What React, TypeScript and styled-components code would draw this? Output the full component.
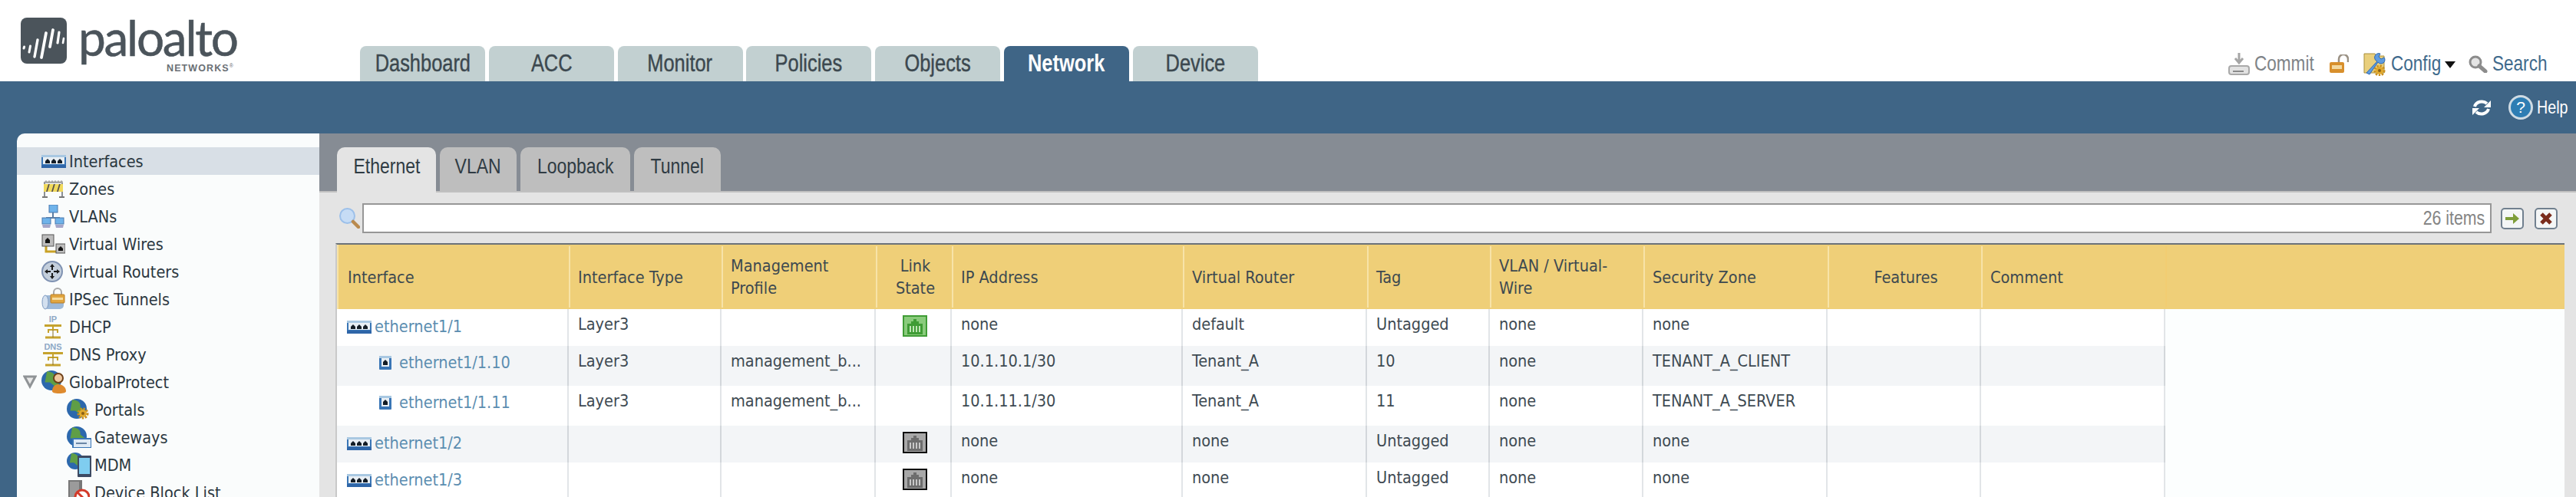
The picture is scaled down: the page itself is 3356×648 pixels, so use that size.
import React from "react"
import styled, { createGlobalStyle } from "styled-components"

const GlobalStyle = createGlobalStyle`
  html, body {
    margin: 0;
    padding: 0;
    background: #fff;
  }
`

const UI_FONT = `"DejaVu Sans Condensed", "DejaVu Sans", sans-serif`
const NARROW_FONT = `"Liberation Sans", sans-serif`

// the product's tall, tight label face: no narrow family is installed, so squeeze Arial metrics
const Squeezed = styled.span<{ $origin?: string }>`
  display: inline-block;
  white-space: nowrap;
  transform: scaleX(0.82);
  transform-origin: ${p => p.$origin ?? "center"};
`

const Page = styled.div`
  width: 3356px;
  height: 648px;
  overflow: hidden;
  display: flex;
  flex-direction: column;
  font-family: ${UI_FONT};
`

const Header = styled.header`
  height: 106px;
  flex: none;
  display: flex;
  align-items: flex-end;
`

const LogoBlock = styled.div`
  width: 469px;
  height: 106px;
  flex: none;
  padding: 23px 0 0 27px;
  box-sizing: border-box;
  display: flex;
  gap: 15px;
`

const LogoWords = styled.div`
  display: flex;
  flex-direction: column;
  width: 203px;
`

const LogoName = styled.div`
  font-family: Lato, sans-serif;
  font-size: 64px;
  line-height: 52px;
  letter-spacing: -2.3px;
  color: #4b545b;
  white-space: nowrap;
  -webkit-text-stroke: 0.5px currentColor;
`

const LogoSub = styled.div`
  font-family: "Liberation Sans", sans-serif;
  font-weight: bold;
  font-size: 12.5px;
  line-height: 12px;
  letter-spacing: 1.1px;
  color: #6a7075;
  margin-top: 8px;
  text-align: right;
  white-space: nowrap;

  sup {
    font-size: 7px;
    font-weight: normal;
    line-height: 0;
  }
`

const MainTabs = styled.nav`
  display: flex;
  gap: 4.8px;
`

const MainTab = styled.div<{ $active?: boolean }>`
  width: 163px;
  height: 46px;
  box-sizing: border-box;
  border-radius: 8px 8px 0 0;
  background: ${p => (p.$active ? "#3f6586" : "#c2d0d1")};
  color: ${p => (p.$active ? "#ffffff" : "#3c484f")};
  font-family: ${NARROW_FONT};
  font-size: 31px;
  font-weight: ${p => (p.$active ? 700 : 400)};
  line-height: 46px;
  text-align: center;
  -webkit-text-stroke: ${p => (p.$active ? 0 : 0.4)}px currentColor;
`

const Tools = styled.div`
  margin-left: auto;
  height: 46px;
  padding-right: 39px;
  display: flex;
  align-items: center;
`

const ToolText = styled.span<{ $muted?: boolean; $width: number }>`
  width: ${p => p.$width}px;
  font-family: ${NARROW_FONT};
  font-size: 27.5px;
  line-height: 32px;
  color: ${p => (p.$muted ? "#7f8488" : "#3f6a8c")};
  margin-left: 6px;
`

const ToolIcon = styled.span<{ $gap?: number }>`
  display: flex;
  margin-left: ${p => p.$gap ?? 0}px;
`

const Caret = styled.span`
  width: 0;
  height: 0;
  margin: 2px 0 0 6px;
  border-left: 7.5px solid transparent;
  border-right: 7.5px solid transparent;
  border-top: 9px solid #111;
`

const BlueBar = styled.div`
  height: 68px;
  flex: none;
  background: #3f6586;
  display: flex;
  align-items: center;
  justify-content: flex-end;
  padding-right: 12px;
  gap: 22px;
`

const HelpGroup = styled.div`
  display: flex;
  align-items: center;
  gap: 5px;
`

const HelpText = styled.span`
  width: 39px;
  font-family: ${NARROW_FONT};
  font-size: 24px;
  color: #fff;
`

const Main = styled.div`
  flex: 1;
  min-height: 0;
  background: #3f6586;
  display: flex;
`

const Sidebar = styled.aside`
  width: 394px;
  flex: none;
  margin-left: 22px;
  padding-top: 18px;
  box-sizing: border-box;
  background: #fafcfc;
  border-radius: 10px 0 0 0;
`

const TreeRow = styled.div<{ $selected?: boolean; $child?: boolean }>`
  height: 36px;
  display: flex;
  align-items: center;
  padding-left: ${p => (p.$child ? 65 : 32)}px;
  background: ${p => (p.$selected ? "#d8dfe6" : "transparent")};
  color: #2b3740;
  font-size: 21.5px;
  white-space: nowrap;
  position: relative;
`

const TreeIcon = styled.span`
  width: 32px;
  height: 32px;
  flex: none;
  margin-right: 4px;
  display: flex;
  align-items: center;
`

const Twisty = styled.span`
  position: absolute;
  left: 8px;
  top: 9px;
  display: flex;
`

const Content = styled.section`
  flex: 1;
  min-width: 0;
  background: #868c94;
  display: flex;
  flex-direction: column;
`

const SubTabs = styled.div`
  height: 75px;
  flex: none;
  box-sizing: border-box;
  padding: 18px 0 0 23px;
  display: flex;
  gap: 5px;
`

const SubTab = styled.div<{ $active?: boolean; $width: number }>`
  width: ${p => p.$width}px;
  height: ${p => (p.$active ? 59 : 57)}px;
  position: relative;
  border-radius: 10px 10px 0 0;
  background: ${p => (p.$active ? "#e4e4e4" : "#bebebe")};
  color: #2f3b43;
  font-family: ${NARROW_FONT};
  font-size: 28px;
  line-height: 50px;
  text-align: center;
`

const Panel = styled.div`
  flex: 1;
  min-height: 0;
  background: #e4e4e4;
  border-top: 2px solid #c0c0c0;
  padding: 14px 15px 0 21px;
`

const FilterRow = styled.div`
  display: flex;
  align-items: center;
  height: 39px;
  margin-bottom: 13px;
  padding-left: 5px;
  padding-right: 9px;
`

const FilterInput = styled.div`
  flex: 1;
  height: 39px;
  margin-left: 3px;
  box-sizing: border-box;
  background: #fff;
  border: 2px solid #979797;
  padding-right: 7px;
  text-align: right;
  font-family: ${NARROW_FONT};
  font-size: 26px;
  line-height: 35px;
  color: #858585;
`

const FilterButton = styled.span<{ $gap: number }>`
  display: flex;
  margin-left: ${p => p.$gap}px;
`

const Table = styled.div`
  background: #fcfefe;
  border-top: 2px solid #6b7278;
  border-left: 2px solid #c9c9c9;
`

const COLUMNS = "302px 199px 201px 99px 301px 240px 160px 200px 240px 200px 240px"

const HeadRow = styled.div`
  display: grid;
  grid-template-columns: ${COLUMNS} 1fr;
  height: 84px;
  box-sizing: border-box;
  background: #efcf78;
  padding: 2px 0 2px 2px;
  box-shadow: inset 2px 0 0 #f7e3a8;
`

const HeadCell = styled.div<{ $center?: boolean; $first?: boolean; $faint?: boolean }>`
  display: flex;
  align-items: center;
  justify-content: ${p => (p.$center ? "center" : "flex-start")};
  text-align: ${p => (p.$center ? "center" : "left")};
  box-sizing: border-box;
  padding: 0 8px 0 ${p => (p.$first ? 12 : 10)}px;
  border-right: 2px solid ${p => (p.$faint ? "#f2cd72" : "#f7e3a8")};
  color: #3d4950;
  font-size: 21.5px;
  line-height: 29px;
  &:last-child {
    border-right: 0;
  }
`

const BodyRow = styled.div<{ $even?: boolean; $height: number }>`
  display: grid;
  grid-template-columns: ${COLUMNS};
  width: 2382px;
  height: ${p => p.$height}px;
  background: ${p => (p.$even ? "#f3f5f7" : "#ffffff")};
`

const Cell = styled.div<{ $even?: boolean }>`
  box-sizing: border-box;
  padding: 8px 0 0 12px;
  border-right: 2px solid ${p => (p.$even ? "#d3d7db" : "#e2e5e8")};
  color: #3e4a52;
  font-size: 21.5px;
  line-height: 24px;
  white-space: nowrap;
  overflow: hidden;
`

const NameCell = styled(Cell)<{ $sub?: boolean }>`
  display: flex;
  align-items: flex-start;
  padding: ${p => (p.$sub ? "10px 0 0 55px" : "11px 0 0 13px")};
`

const NameIcon = styled.span<{ $sub?: boolean }>`
  display: flex;
  margin-top: ${p => (p.$sub ? 3 : 4)}px;
  margin-right: ${p => (p.$sub ? 10 : 4)}px;
`

const NameLink = styled.span`
  color: #5b8db0;
`

const LinkCell = styled(Cell)`
  display: flex;
  justify-content: center;
  padding: 8px 0 0 4px;
`

const PortIcon = () => (
  <svg width="32" height="17" viewBox="0 0 32 17">
    <rect width="32" height="17" rx="1" fill="#3a76b6" />
    <rect x="0" y="0" width="32" height="3" fill="#a9c8e2" />
    <rect x="2" y="3" width="28" height="9" fill="#e9eff4" />
    {[5, 13, 21].map(x => (
      <path key={x} d={`M${x} 11V8l3-3 3 3v3z`} fill="#141d26" />
    ))}
    <rect x="0" y="13" width="32" height="4" fill="#2f66a8" />
  </svg>
)

const SubPortIcon = () => (
  <svg width="16" height="18" viewBox="0 0 16 18">
    <rect width="16" height="18" rx="1" fill="#3a76b6" />
    <rect x="0" y="0" width="16" height="3" fill="#a9c8e2" />
    <rect x="3" y="3" width="10" height="11" fill="#e9eff4" />
    <path d="M5 12V8l3-3 3 3v4z" fill="#141d26" />
  </svg>
)

const LinkIcon = ({ up }: { up?: boolean }) => (
  <svg width="32" height="28" viewBox="0 0 32 28">
    <rect x="1" y="1" width="30" height="26" fill={up ? "#8acb7c" : "#a8a8a8"} stroke={up ? "#3f9c35" : "#111"} strokeWidth="2" />
    <path d="M6 25V11h5V8h3V5h4v3h3v3h5v14z" fill={up ? "#3f9c35" : "#6d6d6d"} />
    {[9, 13, 17, 21].map(x => (
      <rect key={x} x={x} y="14" width="2" height="8" fill={up ? "#bfe6b5" : "#c8c8c8"} />
    ))}
  </svg>
)

const Globe = ({ r = 13, cx = 13, cy = 13 }: { r?: number; cx?: number; cy?: number }) => (
  <>
    <circle cx={cx} cy={cy} r={r} fill="#2c68ad" />
    <path
      d={`M${cx - r * 0.45} ${cy - r * 0.9}c${r * 0.5} 0 ${r * 0.9} ${r * 0.3} ${r * 0.8} ${r * 0.7}l${r * 0.5} ${r * 0.4}-${r * 0.4} ${r * 0.5}-${r * 0.6}-${r * 0.5}-${r * 0.5} 0z`}
      fill="#5f9e46"
    />
  </>
)

const Gear = ({ cx, cy, r = 7 }: { cx: number; cy: number; r?: number }) => (
  <>
    <circle cx={cx} cy={cy} r={r} fill="none" stroke="#c98f1f" strokeWidth="3" strokeDasharray="2.4 1.6" />
    <circle cx={cx} cy={cy} r={r - 1} fill="#e0a92e" />
    <circle cx={cx} cy={cy} r={r / 3} fill="#8a5f16" />
  </>
)

const ZonesIcon = () => (
  <svg width="31" height="24" viewBox="0 0 31 24">
    <path d="M3 3h2v19H3zM26 3h2v19h-2z" fill="#8b8f93" />
    <path d="M1 22h7v2H1zM23 22h7v2h-7z" fill="#777" />
    <rect x="3" y="6" width="25" height="10" fill="#f0d95c" />
    {[6, 13, 20].map(x => (
      <path key={x} d={`M${x} 16l3-10h1.8l-3 10z`} fill="#55504a" />
    ))}
    <path d="M4 3l2-2 2 2 2-2 2 2 2-2 2 2 2-2 2 2 2-2 2 2 2-2 2 2v2H4z" fill="#a6a6a6" />
  </svg>
)

const VlansIcon = () => (
  <svg width="30" height="30" viewBox="0 0 30 30">
    <path d="M15 10v6M6 17h18M6 17v2M24 17v2" stroke="#5d7ea3" strokeWidth="2" fill="none" />
    <rect x="10" y="0" width="11" height="10" fill="#6fb3ea" stroke="#4a78ae" />
    <rect x="1" y="17" width="11" height="8" fill="#6fb3ea" stroke="#4a78ae" />
    <rect x="18" y="17" width="11" height="8" fill="#6fb3ea" stroke="#4a78ae" />
    <path d="M1 26h11l-1 4H2zM18 26h11l-1 4h-9z" fill="#a6a6c9" />
  </svg>
)

const WiresIcon = () => (
  <svg width="31" height="26" viewBox="0 0 31 26">
    <path d="M6 16v7h15" stroke="#c9a227" strokeWidth="3" fill="none" />
    <rect x="1" y="1" width="15" height="15" fill="#bdbdbd" stroke="#555" />
    <path d="M5 12V8l3-3 3 3v4z" fill="#141414" />
    <rect x="19" y="13" width="12" height="12" fill="#bdbdbd" stroke="#555" />
    <path d="M22 22v-3l3-3 3 3v3z" fill="#141414" />
  </svg>
)

const RouterIcon = () => (
  <svg width="28" height="28" viewBox="0 0 28 28">
    <circle cx="14" cy="14" r="13" fill="#c4cfdc" stroke="#7f92b2" strokeWidth="2" />
    <path d="M14 4l3 4h-2v4h-2V8h-2zM14 24l-3-4h2v-4h2v4h2zM4 14l4-3v2h4v2H8v2zM24 14l-4 3v-2h-4v-2h4v-2z" fill="#1a1a1a" />
  </svg>
)

const IpsecIcon = () => (
  <svg width="31" height="30" viewBox="0 0 31 30">
    <rect x="3" y="10" width="26" height="18" rx="5" fill="#9db9d8" />
    <ellipse cx="5" cy="19" rx="4" ry="9" fill="#d3e0ef" stroke="#7d9ac0" />
    <path d="M16 9V6a5 5 0 0 1 10 0v3" fill="none" stroke="#a9a9a9" strokeWidth="2" />
    <rect x="12" y="9" width="18" height="11" rx="1" fill="#e1a640" stroke="#b97d24" />
    <rect x="14" y="13" width="14" height="3" fill="#f6dca0" />
  </svg>
)

const ServiceIcon = ({ label, wide }: { label: string; wide?: boolean }) => (
  <svg width="30" height="32" viewBox="0 0 30 32">
    <text
      x="15"
      y="10"
      textAnchor="middle"
      fontFamily="'Liberation Sans', sans-serif"
      fontWeight="700"
      fontSize="11"
      fill="#8ea9c6"
    >
      {label}
    </text>
    <rect x={wide ? 2 : 4} y="13" width={wide ? 26 : 22} height="3" fill="#c6a32e" />
    <path d="M15 16v4M9 24v-4h12v4" stroke="#c6a32e" strokeWidth="2" fill="none" />
    <path d="M5 30h20" stroke="#c6a32e" strokeWidth="3" />
    <path d="M15 20v10" stroke="#8a6f1c" strokeWidth="1" />
  </svg>
)

const ProtectIcon = () => (
  <svg width="32" height="30" viewBox="0 0 32 30">
    <Globe />
    <circle cx="22" cy="10" r="6" fill="#f0c9a0" stroke="#6e4019" strokeWidth="2" />
    <path d="M14 27c0-6 4-9 8-9s10 3 10 9c0 2-3 3-9 3s-9-1-9-3z" fill="#de8a2e" />
  </svg>
)

const PortalsIcon = () => (
  <svg width="30" height="28" viewBox="0 0 30 28">
    <Globe />
    <Gear cx={21} cy={19} r={6} />
  </svg>
)

const GatewaysIcon = () => (
  <svg width="32" height="28" viewBox="0 0 32 28">
    <Globe />
    <rect x="8" y="16" width="24" height="12" rx="1" fill="#dfeaf5" stroke="#3a76b6" strokeWidth="2" />
    <rect x="12" y="21" width="14" height="2" fill="#6a86a6" />
  </svg>
)

const MdmIcon = () => (
  <svg width="32" height="32" viewBox="0 0 32 32">
    <Globe r={11} cx={11} cy={11} />
    <rect x="14" y="4" width="18" height="28" rx="1" fill="#3d4a63" />
    <rect x="16" y="7" width="14" height="21" fill="#7fcdf0" />
  </svg>
)

const BlockIcon = () => (
  <svg width="30" height="32" viewBox="0 0 30 32">
    <rect x="2" y="0" width="18" height="32" fill="#777" />
    <rect x="4" y="2" width="12" height="30" fill="#9b9b9b" />
    <circle cx="20" cy="22" r="9" fill="#fff" stroke="#d33a2a" strokeWidth="3" />
    <path d="M14 16l12 12" stroke="#d33a2a" strokeWidth="3" />
  </svg>
)

const LogoMark = () => (
  <svg width="60" height="60" viewBox="0 0 60 60">
    <rect width="60" height="60" rx="8" fill="#4b545b" />
    <g stroke="#fff" strokeLinecap="round" fill="none">
      <path d="M4 40l0.6-2" strokeWidth="3" />
      <path d="M11 45l1.5-8" strokeWidth="3" />
      <path d="M18 51l4-22" strokeWidth="3.4" />
      <path d="M27 52l6-32" strokeWidth="3.8" />
      <path d="M38 38l4-22" strokeWidth="3.8" />
      <path d="M48 33l2-14" strokeWidth="3.2" />
      <path d="M55 33l1-6" strokeWidth="2.6" />
    </g>
  </svg>
)

const CommitIcon = () => (
  <svg width="28" height="29" viewBox="0 0 28 29">
    <path d="M14 0v11M9 7l5 6 5-6" stroke="#a5a5a5" strokeWidth="3" fill="none" />
    <path d="M6 16h16v4H6z" fill="#c0c0c0" />
    <rect x="1" y="17" width="26" height="11" rx="3" fill="#e2e2e2" stroke="#a9a9a9" strokeWidth="2" />
    <rect x="6" y="23" width="14" height="2" fill="#8a8a8a" />
  </svg>
)

const LockIcon = () => (
  <svg width="25" height="24" viewBox="0 0 25 24">
    <path d="M12 10V6a6 6 0 0 1 12 0v4" fill="none" stroke="#9a9184" strokeWidth="2.5" />
    <rect x="0" y="10" width="19" height="14" rx="2" fill="#d88f2c" />
    <rect x="3" y="14" width="13" height="5" fill="#f3d9a0" />
  </svg>
)

const ConfigIcon = () => (
  <svg width="30" height="31" viewBox="0 0 30 31">
    <path d="M1 2h14l2 3h10v22H1z" fill="#e9cf7c" stroke="#a98f3d" />
    <path d="M4 27L18 12a5 5 0 0 1 4-10l-2 4 3 3 4-2a5 5 0 0 1-8 6L8 29z" fill="#5f9ce0" stroke="#2f68b0" />
    <Gear cx={21} cy={24} r={6} />
  </svg>
)

const GrayLensIcon = () => (
  <svg width="25" height="23" viewBox="0 0 25 23">
    <circle cx="9" cy="9" r="7" fill="#e4e4e4" stroke="#8c8c8c" strokeWidth="3" />
    <path d="M14 14l8 7" stroke="#8c8c8c" strokeWidth="5" strokeLinecap="round" />
  </svg>
)

const RefreshIcon = () => (
  <svg width="26" height="23" viewBox="0 0 26 23">
    <g fill="none" stroke="#fff" strokeWidth="4">
      <path d="M4 10A9.5 8.5 0 0 1 20 6" />
      <path d="M22 13A9.5 8.5 0 0 1 6 17" />
    </g>
    <path d="M25 2v9h-9zM1 21v-9h9z" fill="#fff" />
  </svg>
)

const HelpIcon = () => (
  <svg width="32" height="32" viewBox="0 0 32 32">
    <circle cx="16" cy="16" r="14.5" fill="#2e7db3" stroke="#cfdbe4" strokeWidth="3" />
    <text x="16" y="23" textAnchor="middle" fontFamily="'Liberation Sans', sans-serif" fontSize="21" fill="#fff">
      ?
    </text>
  </svg>
)

const BlueLensIcon = () => (
  <svg width="27" height="27" viewBox="0 0 27 27">
    <circle cx="10.5" cy="10.5" r="9.5" fill="#c6dcf5" stroke="#9cc0ea" strokeWidth="2" />
    <path d="M18 18l7 7" stroke="#b98a4e" strokeWidth="4.5" strokeLinecap="round" />
  </svg>
)

const GoIcon = () => (
  <svg width="30" height="28" viewBox="0 0 30 28">
    <rect x="1" y="1" width="28" height="26" rx="4" fill="#f4f6f6" stroke="#71808f" strokeWidth="2" />
    <path d="M6 12h10V7l8 7-8 7v-5H6z" fill="#7e9e3a" />
  </svg>
)

const ClearIcon = () => (
  <svg width="30" height="28" viewBox="0 0 30 28">
    <rect x="1" y="1" width="28" height="26" rx="4" fill="#f4f6f6" stroke="#71808f" strokeWidth="2" />
    <path d="M9 8l12 12M21 8L9 20" stroke="#7a2c1c" strokeWidth="5" />
  </svg>
)

const TwistyIcon = () => (
  <svg width="18" height="18" viewBox="0 0 18 18">
    <path d="M2 2h14L9 15z" fill="#e8e8e8" stroke="#8f9396" strokeWidth="3" />
  </svg>
)

const MAIN_TABS = ["Dashboard", "ACC", "Monitor", "Policies", "Objects", "Network", "Device"]

const SUB_TABS = [
  { label: "Ethernet", width: 129 },
  { label: "VLAN", width: 100 },
  { label: "Loopback", width: 143 },
  { label: "Tunnel", width: 113 }
]

const TREE: { label: string; icon: React.ReactNode; child?: boolean }[] = [
  { label: "Interfaces", icon: <PortIcon /> },
  { label: "Zones", icon: <ZonesIcon /> },
  { label: "VLANs", icon: <VlansIcon /> },
  { label: "Virtual Wires", icon: <WiresIcon /> },
  { label: "Virtual Routers", icon: <RouterIcon /> },
  { label: "IPSec Tunnels", icon: <IpsecIcon /> },
  { label: "DHCP", icon: <ServiceIcon label="IP" /> },
  { label: "DNS Proxy", icon: <ServiceIcon label="DNS" wide /> },
  { label: "GlobalProtect", icon: <ProtectIcon /> },
  { label: "Portals", icon: <PortalsIcon />, child: true },
  { label: "Gateways", icon: <GatewaysIcon />, child: true },
  { label: "MDM", icon: <MdmIcon />, child: true },
  { label: "Device Block List", icon: <BlockIcon />, child: true }
]

const HEADS = [
  { label: "Interface" },
  { label: "Interface Type" },
  { label: "Management Profile" },
  { label: "Link State", center: true },
  { label: "IP Address" },
  { label: "Virtual Router" },
  { label: "Tag" },
  { label: "VLAN / Virtual-Wire" },
  { label: "Security Zone" },
  { label: "Features", center: true },
  { label: "Comment", faint: true }
]

type Row = {
  name: string
  sub?: boolean
  type?: string
  profile?: string
  link?: "up" | "down"
  ip: string
  router: string
  tag: string
  zone: string
  height: number
}

const ROWS: Row[] = [
  { name: "ethernet1/1", type: "Layer3", link: "up", ip: "none", router: "default", tag: "Untagged", zone: "none", height: 48 },
  { name: "ethernet1/1.10", sub: true, type: "Layer3", profile: "management_b...", ip: "10.1.10.1/30", router: "Tenant_A", tag: "10", zone: "TENANT_A_CLIENT", height: 52 },
  { name: "ethernet1/1.11", sub: true, type: "Layer3", profile: "management_b...", ip: "10.1.11.1/30", router: "Tenant_A", tag: "11", zone: "TENANT_A_SERVER", height: 52 },
  { name: "ethernet1/2", link: "down", ip: "none", router: "none", tag: "Untagged", zone: "none", height: 48 },
  { name: "ethernet1/3", link: "down", ip: "none", router: "none", tag: "Untagged", zone: "none", height: 48 }
]

export default function App() {
  return (
    <Page>
      <GlobalStyle />
      <Header>
        <LogoBlock>
          <LogoMark />
          <LogoWords>
            <LogoName>paloalto</LogoName>
            <LogoSub>
              NETWORKS<sup>®</sup>
            </LogoSub>
          </LogoWords>
        </LogoBlock>
        <MainTabs>
          {MAIN_TABS.map(tab => (
            <MainTab key={tab} $active={tab === "Network"}>
              <Squeezed>{tab}</Squeezed>
            </MainTab>
          ))}
        </MainTabs>
        <Tools>
          <ToolIcon>
            <CommitIcon />
          </ToolIcon>
          <ToolText $muted $width={78}>
            <Squeezed $origin="left">Commit</Squeezed>
          </ToolText>
          <ToolIcon $gap={20}>
            <LockIcon />
          </ToolIcon>
          <ToolIcon $gap={19}>
            <ConfigIcon />
          </ToolIcon>
          <ToolText $width={64}>
            <Squeezed $origin="left">Config</Squeezed>
          </ToolText>
          <Caret />
          <ToolIcon $gap={17}>
            <GrayLensIcon />
          </ToolIcon>
          <ToolText $width={70}>
            <Squeezed $origin="left">Search</Squeezed>
          </ToolText>
        </Tools>
      </Header>
      <BlueBar>
        <RefreshIcon />
        <HelpGroup>
          <HelpIcon />
          <HelpText>
            <Squeezed $origin="left">Help</Squeezed>
          </HelpText>
        </HelpGroup>
      </BlueBar>
      <Main>
        <Sidebar>
          {TREE.map((item, i) => (
            <TreeRow key={item.label} $selected={i === 0} $child={item.child}>
              {item.label === "GlobalProtect" && (
                <Twisty>
                  <TwistyIcon />
                </Twisty>
              )}
              <TreeIcon>{item.icon}</TreeIcon>
              {item.label}
            </TreeRow>
          ))}
        </Sidebar>
        <Content>
          <SubTabs>
            {SUB_TABS.map((tab, i) => (
              <SubTab key={tab.label} $width={tab.width} $active={i === 0}>
                <Squeezed>{tab.label}</Squeezed>
              </SubTab>
            ))}
          </SubTabs>
          <Panel>
            <FilterRow>
              <BlueLensIcon />
              <FilterInput>
                <Squeezed $origin="right">26 items</Squeezed>
              </FilterInput>
              <FilterButton $gap={12}>
                <GoIcon />
              </FilterButton>
              <FilterButton $gap={14}>
                <ClearIcon />
              </FilterButton>
            </FilterRow>
            <Table>
              <HeadRow>
                {HEADS.map((head, i) => (
                  <HeadCell key={head.label} $center={head.center} $first={i === 0} $faint={head.faint}>
                    <span>{head.label}</span>
                  </HeadCell>
                ))}
                <HeadCell />
              </HeadRow>
              {ROWS.map((row, i) => {
                const even = i % 2 === 1
                return (
                  <BodyRow key={row.name} $even={even} $height={row.height}>
                    <NameCell $even={even} $sub={row.sub}>
                      <NameIcon $sub={row.sub}>{row.sub ? <SubPortIcon /> : <PortIcon />}</NameIcon>
                      <NameLink>{row.name}</NameLink>
                    </NameCell>
                    <Cell $even={even}>{row.type}</Cell>
                    <Cell $even={even}>{row.profile}</Cell>
                    <LinkCell $even={even}>{row.link && <LinkIcon up={row.link === "up"} />}</LinkCell>
                    <Cell $even={even}>{row.ip}</Cell>
                    <Cell $even={even}>{row.router}</Cell>
                    <Cell $even={even}>{row.tag}</Cell>
                    <Cell $even={even}>none</Cell>
                    <Cell $even={even}>{row.zone}</Cell>
                    <Cell $even={even} />
                    <Cell $even={even} />
                  </BodyRow>
                )
              })}
            </Table>
          </Panel>
        </Content>
      </Main>
    </Page>
  )
}
